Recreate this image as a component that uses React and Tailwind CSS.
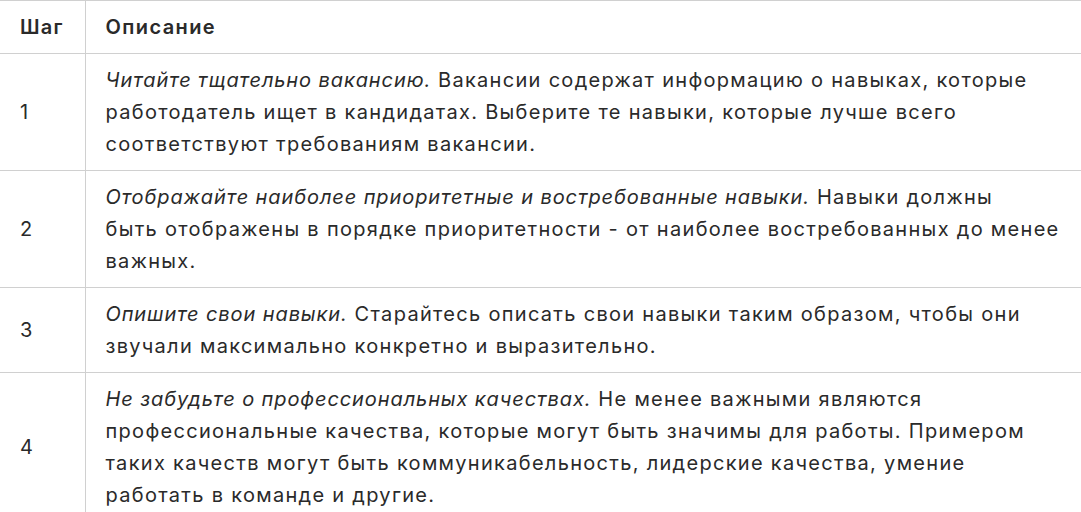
import React from 'react';

// lines are broken as in the reference
const rows = [
  {
    step: '1',
    lead: 'Читайте тщательно вакансию.',
    lines: [
      'Вакансии содержат информацию о навыках, которые',
      'работодатель ищет в кандидатах. Выберите те навыки, которые лучше всего',
      'соответствуют требованиям вакансии.',
    ],
  },
  {
    step: '2',
    lead: 'Отображайте наиболее приоритетные и востребованные навыки.',
    lines: [
      'Навыки должны',
      'быть отображены в порядке приоритетности - от наиболее востребованных до менее',
      'важных.',
    ],
  },
  {
    step: '3',
    lead: 'Опишите свои навыки.',
    lines: [
      'Старайтесь описать свои навыки таким образом, чтобы они',
      'звучали максимально конкретно и выразительно.',
    ],
  },
  {
    step: '4',
    lead: 'Не забудьте о профессиональных качествах.',
    lines: [
      'Не менее важными являются',
      'профессиональные качества, которые могут быть значимы для работы. Примером',
      'таких качеств могут быть коммуникабельность, лидерские качества, умение',
      'работать в команде и другие.',
    ],
  },
];

export default function App() {
  return (
    <div className="w-[1081px] h-[512px] overflow-hidden bg-white font-['Inter',sans-serif] text-[20px] leading-[32px] tracking-[1.3px] text-[#2a2a2a]">
      <table className="w-full border-collapse text-left">
        <thead>
          <tr>
            <th className="w-[85px] border-y border-r border-[#d0d0d0] px-5 py-[10px] font-semibold tracking-[1.2px]">Шаг</th>
            <th className="border-y border-[#d0d0d0] px-5 py-[10px] font-semibold tracking-[1.4px]">Описание</th>
          </tr>
        </thead>
        <tbody>
          {rows.map((r) => (
            <tr key={r.step}>
              <td className="border-y border-r border-[#d0d0d0] px-5 py-[10px] align-middle">{r.step}</td>
              <td className="border-y border-[#d0d0d0] py-[10px] pl-5 pr-0 whitespace-nowrap">
                <em className="italic tracking-[0.9px]">{r.lead}</em> {r.lines[0]}
                {r.lines.slice(1).map((l) => (
                  <React.Fragment key={l}>
                    <br />
                    {l}
                  </React.Fragment>
                ))}
              </td>
            </tr>
          ))}
        </tbody>
      </table>
    </div>
  );
}
